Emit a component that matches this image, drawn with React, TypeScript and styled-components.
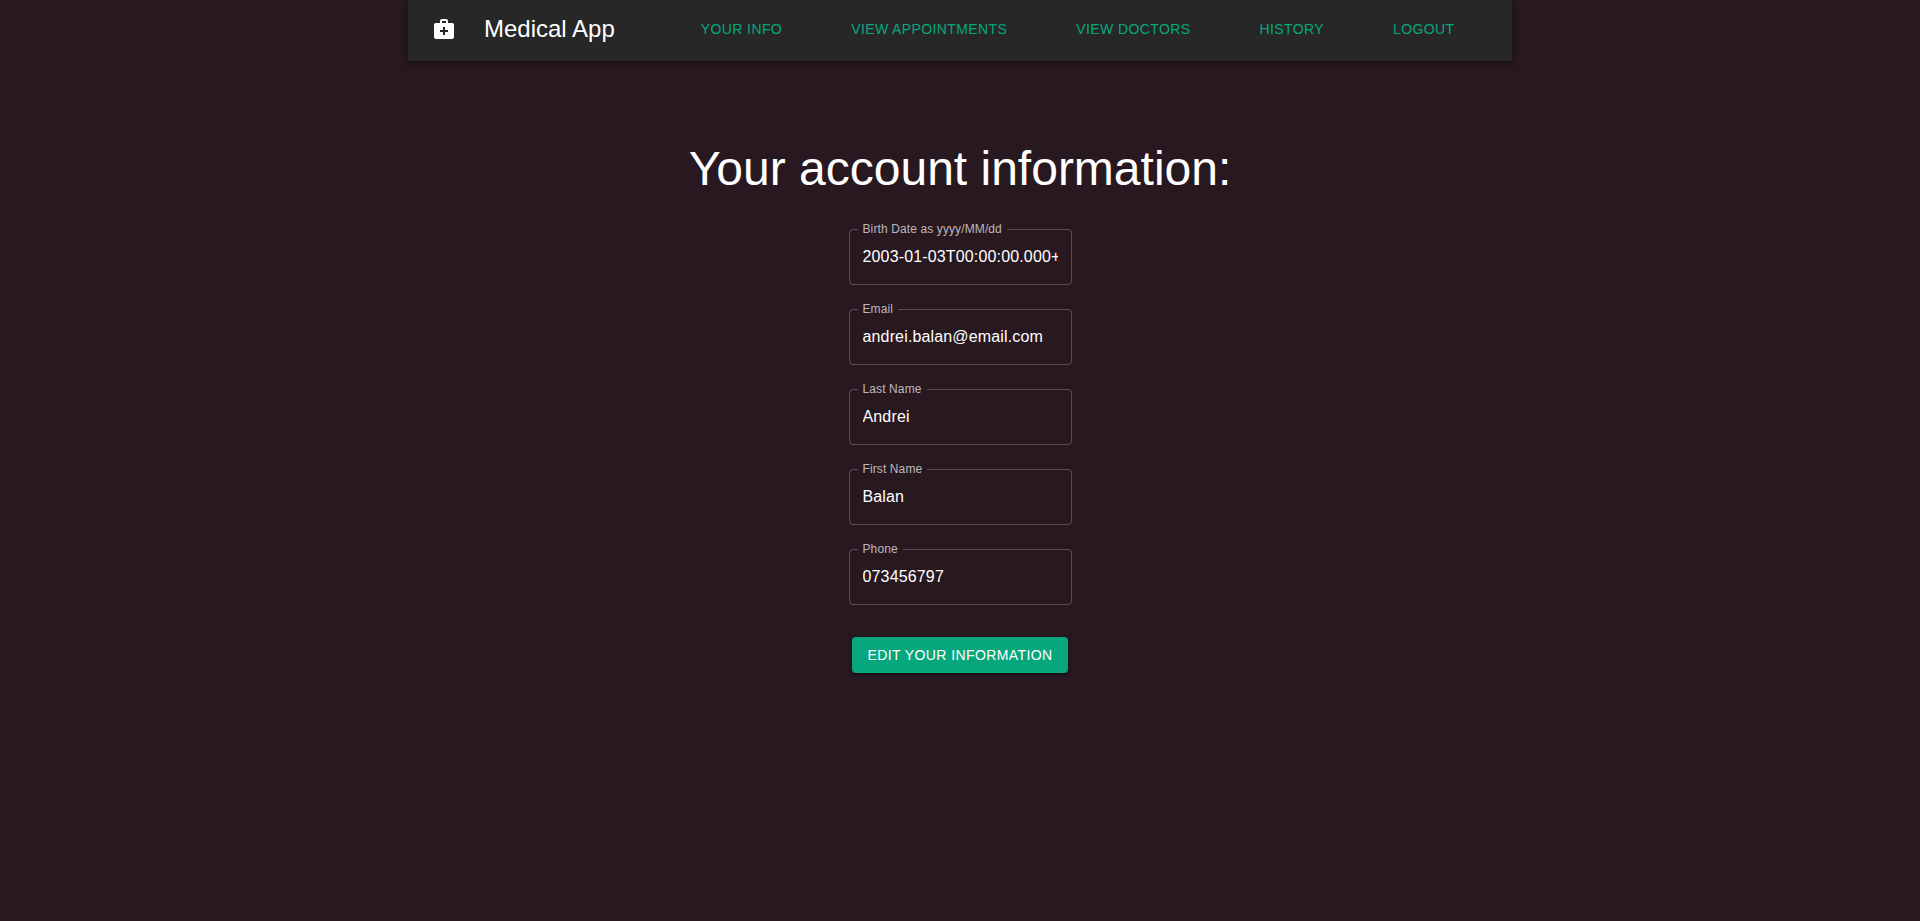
import React from "react";
import styled, { createGlobalStyle } from "styled-components";

const GlobalStyle = createGlobalStyle`
  *, *::before, *::after {
    box-sizing: border-box;
  }
  body {
    margin: 0;
    background: #28181f;
    color: #fff;
    font-family: "Liberation Sans", Arial, sans-serif;
  }
`;

const Container = styled.div`
  width: 100%;
  max-width: 1200px;
  margin: 0 auto;
  padding: 0 48px;
`;

const AppBar = styled.header`
  display: flex;
  align-items: center;
  min-height: 61px;
  padding: 0 24px 3px;
  background: #272727;
  box-shadow:
    0 2px 4px -1px rgba(0, 0, 0, 0.2),
    0 4px 5px 0 rgba(0, 0, 0, 0.14),
    0 1px 10px 0 rgba(0, 0, 0, 0.12);
`;

const Logo = styled.svg`
  flex: none;
  width: 24px;
  height: 24px;
  fill: currentColor;
`;

const Brand = styled.span`
  margin-left: 28px;
  font-size: 24px;
  line-height: 32px;
  white-space: nowrap;
`;

const Nav = styled.nav`
  display: flex;
  flex-wrap: wrap;
  gap: 53px;
  margin-left: 78px;
`;

const NavLink = styled.a`
  padding: 6px 8px;
  color: #06a77d;
  font-size: 14px;
  line-height: 24px;
  letter-spacing: 0.02857em;
  text-transform: uppercase;
  text-decoration: none;
  white-space: nowrap;
`;

const Main = styled.main`
  display: flex;
  flex-direction: column;
  align-items: center;
  padding: 80px 0 48px;
`;

const Title = styled.h1`
  margin: 0;
  font-size: 48px;
  font-weight: 400;
  line-height: 56px;
  text-align: center;
`;

const Form = styled.form`
  display: flex;
  flex-direction: column;
  align-items: center;
  gap: 32px;
  margin-top: 25px;
`;

const Fields = styled.div`
  display: flex;
  flex-direction: column;
  gap: 17px;
  width: 223px;
`;

const Outline = styled.fieldset`
  min-width: 0;
  height: 63px;
  margin: 0;
  padding: 0 8px;
  border: 1px solid rgba(255, 255, 255, 0.23);
  border-radius: 4px;
`;

const Legend = styled.legend`
  padding: 0 5px;
  color: rgba(255, 255, 255, 0.7);
  font-size: 12px;
  line-height: 14px;
  letter-spacing: 0.00938em;
`;

const Input = styled.input`
  display: block;
  width: 100%;
  height: 48px;
  padding: 0 5px 6px;
  border: 0;
  outline: 0;
  background: transparent;
  color: #fff;
  font: inherit;
  font-size: 16px;
  letter-spacing: 0.00938em;
`;

const SubmitButton = styled.button`
  padding: 6px 16px;
  border: 0;
  border-radius: 4px;
  background: #06a77d;
  color: #fff;
  font: inherit;
  font-size: 14px;
  line-height: 24px;
  letter-spacing: 0.02857em;
  text-transform: uppercase;
  white-space: nowrap;
  cursor: pointer;
  box-shadow:
    0 3px 1px -2px rgba(0, 0, 0, 0.2),
    0 2px 2px 0 rgba(0, 0, 0, 0.14),
    0 1px 5px 0 rgba(0, 0, 0, 0.12);
`;

const links = ["Your info", "View appointments", "View doctors", "History", "Logout"];

const fields = [
  { id: "birthDate", label: "Birth Date as yyyy/MM/dd", value: "2003-01-03T00:00:00.000+00:00" },
  { id: "email", label: "Email", value: "andrei.balan@email.com" },
  { id: "lastName", label: "Last Name", value: "Andrei" },
  { id: "firstName", label: "First Name", value: "Balan" },
  { id: "phone", label: "Phone", value: "073456797" },
];

export default function App() {
  return (
    <>
      <GlobalStyle />
      <Container>
        <AppBar>
          <Logo viewBox="0 0 24 24" aria-hidden="true">
            <path d="M20 6h-4V4c0-1.1-.9-2-2-2h-4c-1.1 0-2 .9-2 2v2H4c-1.1 0-2 .9-2 2v12c0 1.1.9 2 2 2h16c1.1 0 2-.9 2-2V8c0-1.1-.9-2-2-2zM10 4h4v2h-4V4zm6 11h-3v3h-2v-3H8v-2h3v-3h2v3h3v2z" />
          </Logo>
          <Brand>Medical App</Brand>
          <Nav>
            {links.map((link) => (
              <NavLink key={link} href="#">
                {link}
              </NavLink>
            ))}
          </Nav>
        </AppBar>
        <Main>
          <Title>Your account information:</Title>
          <Form onSubmit={(event) => event.preventDefault()}>
            <Fields>
              {fields.map(({ id, label, value }) => (
                <Outline key={id}>
                  <Legend>
                    <label htmlFor={id}>{label}</label>
                  </Legend>
                  <Input id={id} name={id} type="text" defaultValue={value} readOnly />
                </Outline>
              ))}
            </Fields>
            <SubmitButton type="submit">Edit your information</SubmitButton>
          </Form>
        </Main>
      </Container>
    </>
  );
}
